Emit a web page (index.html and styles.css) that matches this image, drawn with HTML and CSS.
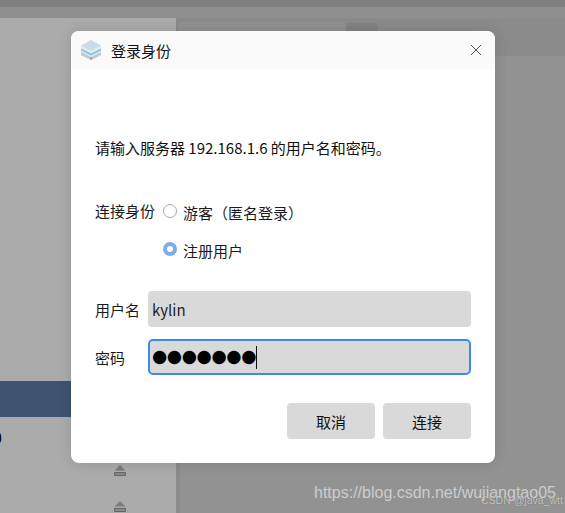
FILE: index.html
```html
<!DOCTYPE html>
<html lang="zh">
<head>
<meta charset="utf-8">
<title>登录身份</title>
<link rel="stylesheet" href="styles.css">
</head>
<body>
<div class="desktop">
  <div class="strip-top"></div>
  <div class="strip-second"></div>
  <div class="main">
    <aside class="sidebar">
      <div class="side-selected"></div>
      <div class="side-row"><span class="side-zero">0</span></div>
      <div class="side-eject">
        <svg class="eject" viewBox="0 0 12 11"><path d="M6 0 11.500 5.500H0.500Z" fill="#7c7c7c"/><path d="M0.500 7.500H11.500V10.500H0.500ZM0.500 9H11.500" fill="none" stroke="#666" stroke-width="1"/></svg>
      </div>
      <div class="side-eject">
        <svg class="eject" viewBox="0 0 12 11"><path d="M6 0 11.500 5.500H0.500Z" fill="#7c7c7c"/><path d="M0.500 7.500H11.500V10.500H0.500ZM0.500 9H11.500" fill="none" stroke="#666" stroke-width="1"/></svg>
      </div>
    </aside>
    <div class="side-edge"></div>
    <section class="content">
      <div class="tabs">
        <div class="tab tab-main"></div>
        <div class="tab tab-add"></div>
      </div>
    </section>
  </div>
</div>

<div class="dialog">
  <header class="titlebar">
    <svg class="app-icon" viewBox="0 0 22 22">
      <defs>
        <linearGradient id="topface" x1="0" y1="0" x2="0" y2="1">
          <stop offset="0" stop-color="#d4dadd"/>
          <stop offset="1" stop-color="#bfe0f4"/>
        </linearGradient>
      </defs>
      <path d="M11 1 21 6.500V16L11 21 1 16V6.500Z" fill="#e6e9eb"/>
      <path d="M11 1 21 6.500 11 12 1 6.500Z" fill="url(#topface)"/>
      <path d="M1 9.500 11 14.500 21 9.500V11.500L11 16.500 1 11.500Z" fill="#7cc4ee"/>
      <path d="M1 13 11 18 21 13V16L11 21 1 16Z" fill="#c2c7cb"/>
      <path d="M11 18V21" stroke="#8d9296" stroke-width="1"/>
    </svg>
    <span class="title">登录身份</span>
    <svg class="close" viewBox="0 0 12 12"><path d="M1 1 11 11M11 1 1 11" stroke="#555" stroke-width="1" fill="none"/></svg>
  </header>
  <div class="body">
    <p class="prompt">请输入服务器 192.168.1.6 的用户名和密码。</p>
    <div class="identity">
      <span class="label identity-label">连接身份</span>
      <div class="radios">
        <label class="radio-row"><span class="radio"></span><span>游客（匿名登录）</span></label>
        <label class="radio-row"><span class="radio radio-on"></span><span>注册用户</span></label>
      </div>
    </div>
    <div class="field field-user">
      <span class="label">用户名</span>
      <div class="input">kylin</div>
    </div>
    <div class="field field-pass">
      <span class="label">密码</span>
      <div class="input input-focus"><span class="dots">●●●●●●●</span><span class="caret"></span></div>
    </div>
    <div class="actions">
      <button class="btn">取消</button>
      <button class="btn">连接</button>
    </div>
  </div>
</div>

<div class="wm-blog">https://blog.csdn.net/wujiangtao05</div>
<div class="wm-csdn">CSDN @java_wtt</div>
</body>
</html>
```

FILE: styles.css
```css
* { box-sizing: border-box; }
html, body { margin: 0; padding: 0; }
body {
  width: 565px;
  height: 513px;
  overflow: hidden;
  position: relative;
  font-family: "Noto Sans CJK SC", "Noto Sans", sans-serif;
  font-size: 15px;
  color: #1a1a1a;
  background: #929292;
}
.desktop { display: flex; flex-direction: column; height: 513px; }
.strip-top { height: 7px; background: #7f7f7f; flex-shrink: 0; }
.strip-second { height: 11px; background: #8f8f8f; flex-shrink: 0; }
.main { flex: 1; display: flex; min-height: 0; }
.sidebar {
  width: 176px;
  background: #ababab;
  padding-top: 363px;
  display: flex;
  flex-direction: column;
  flex-shrink: 0;
}
.side-edge { width: 4px; background: #8b8b8b; flex-shrink: 0; }
.side-selected { height: 36px; background: #3f5470; flex-shrink: 0; }
.side-row { height: 48px; font-size: 16px; color: #000; overflow: hidden; flex-shrink: 0; }
.side-zero { display: block; margin-left: -7px; line-height: 40px; }
.side-eject { height: 36px; padding-left: 114px; flex-shrink: 0; }
.eject { display: block; width: 12px; height: 11px; }
.content { flex: 1; background: #929292; }
.tabs {
  height: 38px;
  background: #8b8b8b;
  display: flex;
  align-items: flex-end;
}
.tab { border-radius: 4px 4px 0 0; }
.tab-main { width: 167px; height: 34px; margin-left: -2px; background: #929292; }
.tab-add { width: 32px; height: 33px; background: #838383; margin-left: 1px; }

.dialog {
  position: absolute;
  left: 71px;
  top: 31px;
  width: 424px;
  height: 432px;
  background: #fff;
  border-radius: 8px;
  overflow: hidden;
  box-shadow: 0 0 14px rgba(0, 0, 0, 0.14);
}
.titlebar {
  height: 38px;
  background: #fafafa;
  display: flex;
  align-items: center;
  padding: 0 13px 0 9px;
}
.app-icon { width: 22px; height: 22px; flex-shrink: 0; }
.title { margin-left: 9px; flex: 1; color: #111; }
.close { width: 12px; height: 12px; margin-top: -1px; }
.body { padding: 0 24px; }
.prompt { margin: 68px 0 0; line-height: 22px; color: #111; }
.identity { display: flex; margin-top: 41px; }
.identity-label { width: 68px; flex-shrink: 0; line-height: 22px; }
.radios { display: flex; flex-direction: column; gap: 16px; padding-top: 1px; }
.radio-row { display: flex; align-items: center; height: 22px; gap: 6px; }
.radio {
  width: 14px;
  height: 14px;
  border-radius: 50%;
  border: 1px solid #a8a8a8;
  background: #fff;
  margin-top: -2px;
}
.radio-on { border: 4px solid #78aef0; background: #fff; }
.field { display: flex; align-items: center; }
.field .label { width: 53px; flex-shrink: 0; }
.field-user { margin-top: 30px; }
.field-pass { margin-top: 12px; }
.input {
  width: 323px;
  height: 36px;
  background: #d9d9d9;
  border-radius: 4px;
  padding-left: 4px;
  display: flex;
  align-items: center;
  color: #222;
}
.input-focus {
  border: 2px solid #3b8bea;
  padding-left: 2px;
  border-radius: 5px;
}
.dots {
  font-family: "DejaVu Sans", sans-serif;
  font-size: 17.500px;
  letter-spacing: -0.400px;
  color: #000;
  line-height: 1;
}
.caret { width: 1px; height: 23px; background: #111; }
.actions { display: flex; justify-content: flex-end; gap: 8px; margin-top: 28px; }
.btn {
  width: 88px;
  height: 36px;
  border: 0;
  border-radius: 4px;
  background: #d9d9d9;
  font: inherit;
  color: #111;
  padding: 0;
}
.wm-blog {
  position: absolute;
  left: 314px;
  top: 484px;
  font-family: "Liberation Sans", sans-serif;
  font-size: 16px;
  color: rgba(255, 255, 255, 0.55);
  white-space: nowrap;
}
.wm-csdn {
  position: absolute;
  left: 481px;
  top: 494px;
  font-family: "Liberation Sans", sans-serif;
  font-size: 10.500px;
  color: rgba(255, 255, 255, 0.6);
  text-shadow: 0 0 1px rgba(60, 60, 60, 0.6);
  white-space: nowrap;
}
```
